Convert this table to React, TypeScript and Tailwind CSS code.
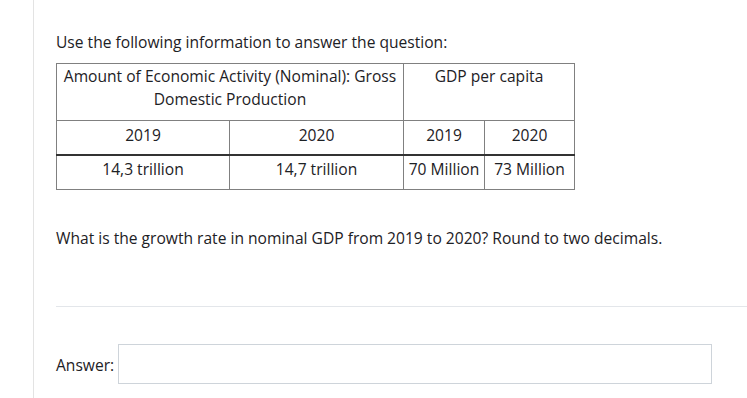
import React from "react";

export default function App() {
  const font = { fontFamily: '"Open Sans", "Noto Sans", sans-serif' };
  return (
    <div className="flex h-[398px] w-[747px] bg-white text-[#1d2125] overflow-hidden" style={font}>
      <div className="w-[33px] shrink-0" />
      <div className="flex-1 border-l border-[#e3e3e3] pl-[22px] pt-[30px]">
        <p className="text-[15.6px] leading-[24px]">Use the following information to answer the question:</p>
        <table className="mt-[9px] border-collapse text-[15.6px] leading-[23px] text-center">
          <tbody>
            <tr>
              <td colSpan={2} className="border border-[#808080] w-[347px] h-[57px] align-top px-[4px] pt-[1px]">
                Amount of Economic Activity (Nominal): Gross Domestic Production
              </td>
              <td colSpan={2} className="border border-[#808080] align-top pt-[1px]">GDP per capita</td>
            </tr>
            <tr>
              <td className="border border-[#808080] border-b-2 border-b-[#333] w-[173px] h-[34px] pb-[4px]">2019</td>
              <td className="border border-[#808080] border-b-2 border-b-[#333] w-[174px] pb-[4px]">2020</td>
              <td className="border border-[#808080] border-b-2 border-b-[#333] w-[81px] pb-[4px]">2019</td>
              <td className="border border-[#808080] border-b-2 border-b-[#333] w-[90px] pb-[4px]">2020</td>
            </tr>
            <tr>
              <td className="border border-[#808080] h-[35px] pb-[5px]">14,3 trillion</td>
              <td className="border border-[#808080] pb-[5px]">14,7 trillion</td>
              <td className="border border-[#808080] whitespace-nowrap pb-[5px] px-[2px]">70 Million</td>
              <td className="border border-[#808080] whitespace-nowrap pb-[5px] px-[2px]">73 Million</td>
            </tr>
          </tbody>
        </table>
        <p className="mt-[36px] text-[15.6px] leading-[24px]">
          What is the growth rate in nominal GDP from 2019 to 2020? Round to two decimals.
        </p>
        <div className="mt-[56px] border-t border-[#e3e6ea]" />
        <div className="mt-[37px] flex items-center">
          <span className="text-[15.6px] leading-[24px] mr-[4px] pt-[2px]">Answer:</span>
          <div className="w-[594px] h-[40px] border border-[#ced4da] bg-white" />
        </div>
      </div>
    </div>
  );
}
